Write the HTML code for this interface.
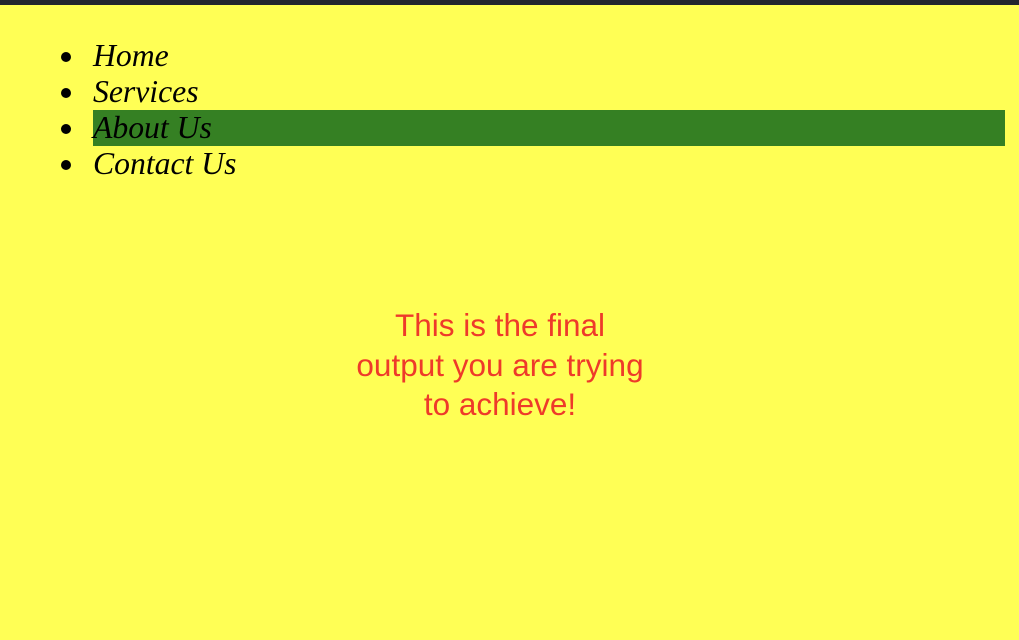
<!DOCTYPE html>
<html><head><style>
html,body{margin:0;padding:0;}
body{width:1019px;height:640px;background:#ffff55;position:relative;overflow:hidden;}
.bar{position:absolute;left:0;top:0;width:1019px;height:5px;background:#23262e;}
ul{position:absolute;left:0;top:38px;margin:0;padding:0 14px 0 93px;width:912px;font-family:"Liberation Serif",serif;font-style:italic;font-size:31.7px;line-height:36px;list-style:none;}
li{height:36px;position:relative;}
li:before{content:"";position:absolute;left:-32px;top:14px;width:10px;height:10px;border-radius:50%;background:#000;}
li.a{background:#358023;}
.msg{position:absolute;left:300px;width:400px;top:306px;text-align:center;font-family:"Liberation Sans",sans-serif;font-size:31.5px;line-height:39.5px;color:#ee3a2a;}
</style></head><body>
<div class="bar"></div>
<ul><li>Home</li><li>Services</li><li class="a">About Us</li><li>Contact Us</li></ul>
<div class="msg">This is the final<br>output you are trying<br>to achieve!</div>
</body></html>
